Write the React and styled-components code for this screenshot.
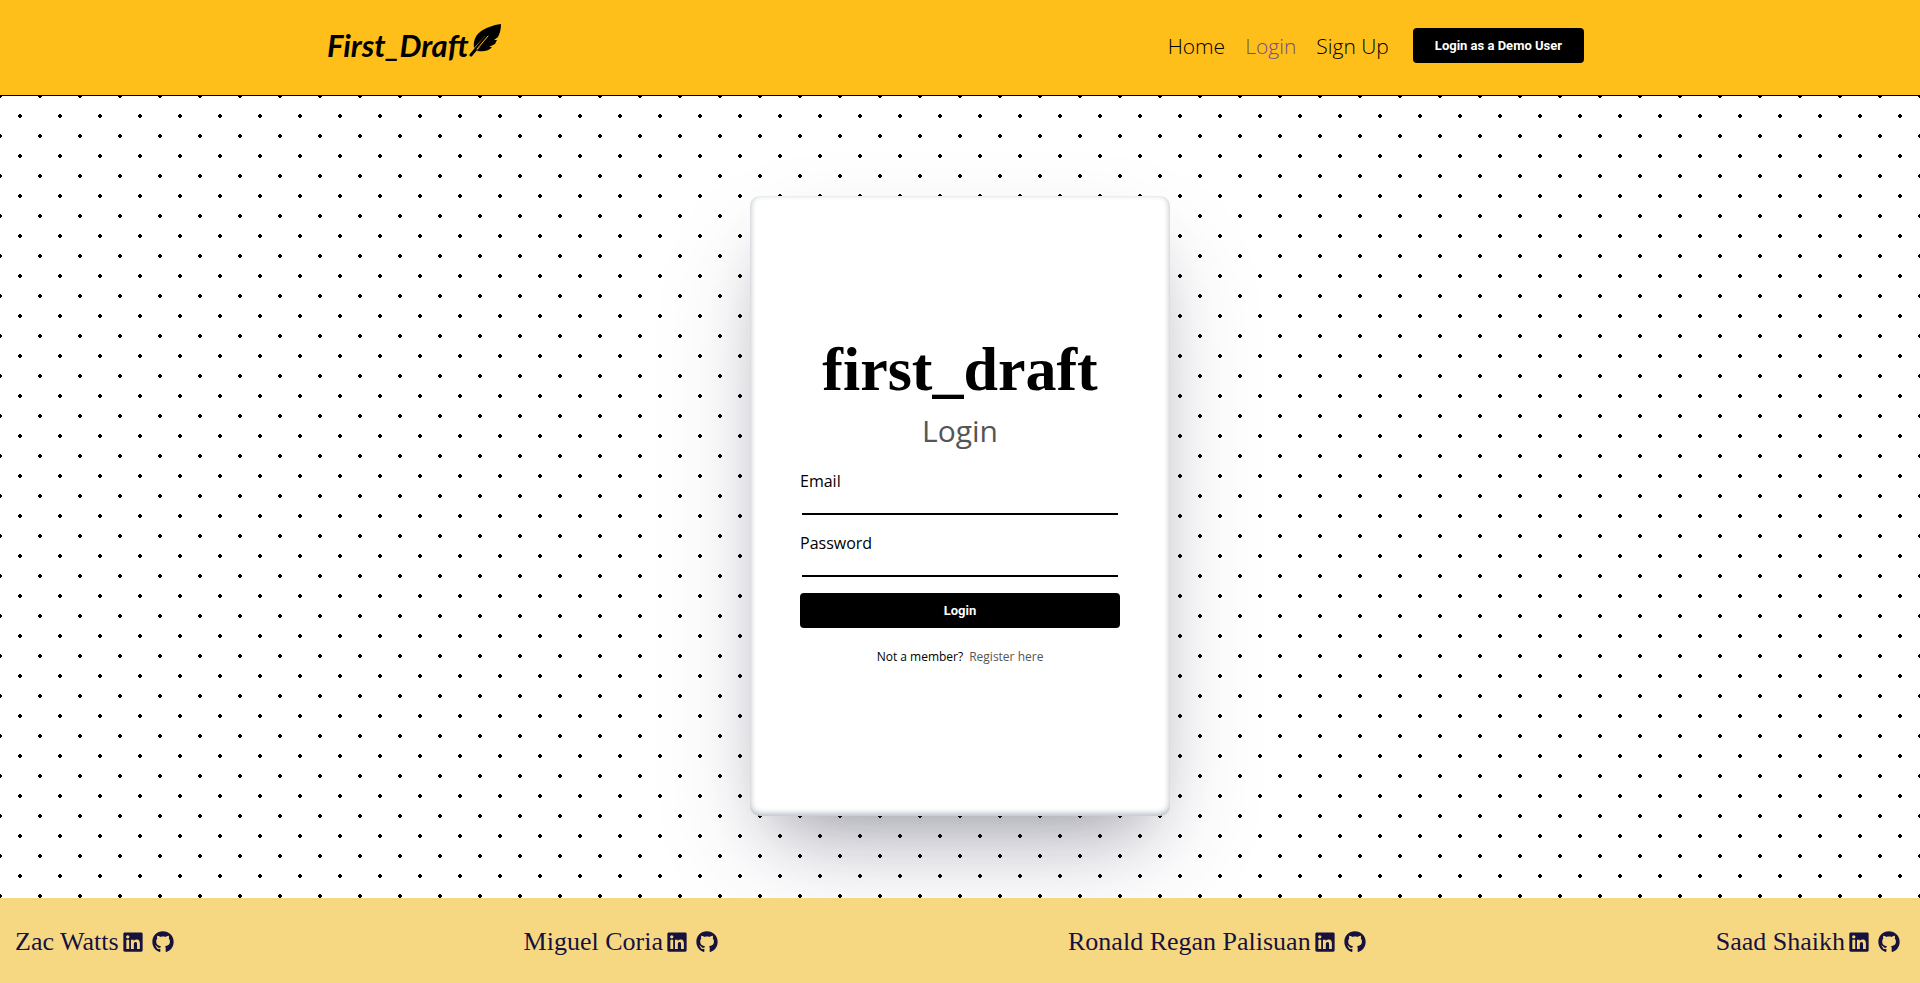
import React from "react";
import styled, { createGlobalStyle } from "styled-components";
import { FaGithub, FaLinkedin } from "react-icons/fa";

const GlobalStyle = createGlobalStyle`
  * { box-sizing: border-box; }
  body {
    margin: 0;
    color: #000;
    font-family: "Open Sans", "Noto Sans", sans-serif;
  }
`;

const Page = styled.div`
  display: flex;
  flex-direction: column;
  min-height: 100vh;
`;

const Header = styled.header`
  background: #ffbf1a;
  border-bottom: 1px solid #000;
`;

const HeaderInner = styled.div`
  display: flex;
  align-items: center;
  justify-content: space-between;
  max-width: 1280px;
  margin: 0 auto;
  padding: 16px 16px 20px 7px;
`;

const Logo = styled.a`
  display: flex;
  align-items: center;
  color: #000;
  text-decoration: none;
  font: italic 700 31px/59px "Brush Script MT", "Lato", sans-serif;
`;

const Feather = styled.svg`
  width: 34px;
  height: 34px;
  margin-bottom: 12px;
`;

const Nav = styled.nav`
  display: flex;
  align-items: center;
  gap: 20px;
`;

const NavLink = styled.a`
  color: ${(p) => (p.$visited ? "#754a96" : "#000")};
  font-size: 21px;
  font-weight: 300;
  line-height: 28px;
  text-decoration: none;
`;

const Button = styled.button`
  padding: 10px 22px;
  border: 0;
  border-radius: 4px;
  background: #000;
  color: #fff;
  font: 700 13px/15px Roboto, "Liberation Sans", Arial, sans-serif;
  cursor: pointer;
`;

const DemoButton = styled(Button)`
  margin-left: 4px;
`;

const Main = styled.main`
  flex: 1;
  display: flex;
  align-items: flex-start;
  justify-content: center;
  padding: 100px 16px 82px;
  background-color: #fff;
  background-image: radial-gradient(#000 2px, transparent 2px),
    radial-gradient(#000 2px, transparent 2px);
  background-position: 20px 20px, 0 0;
  background-size: 40px 40px;
`;

const Card = styled.section`
  display: flex;
  flex-direction: column;
  justify-content: center;
  width: 100%;
  max-width: 420px;
  min-height: 620px;
  padding: 0 50px 18px;
  border-radius: 10px;
  background: #fff;
  box-shadow: rgba(50, 50, 93, 0.25) 0 50px 100px -20px,
    rgba(0, 0, 0, 0.3) 0 30px 60px -30px,
    rgba(10, 37, 64, 0.35) 0 -2px 6px 0 inset;
`;

const Title = styled.h1`
  margin: 0;
  text-align: center;
  font: 700 62px/80px "Source Serif Pro", "Liberation Serif", serif;
`;

const Subtitle = styled.h2`
  margin: 0 0 16px;
  color: #555;
  text-align: center;
  font-size: 30px;
  font-weight: 400;
  line-height: 44px;
`;

const Form = styled.form`
  display: flex;
  flex-direction: column;
`;

const Field = styled.div`
  display: flex;
  flex-direction: column;
  margin-bottom: 16px;
`;

const Label = styled.label`
  font-size: 16px;
  font-weight: 500;
  line-height: 24px;
`;

const Input = styled.input`
  height: 22px;
  margin: 0 2px;
  padding: 0;
  border: 0;
  border-bottom: 2px solid #000;
  background: transparent;
  font: inherit;
  outline: none;
`;

const Prompt = styled.p`
  display: flex;
  justify-content: center;
  gap: 6px;
  margin: 20px 0 0;
  font-size: 12px;
  font-weight: 500;
  line-height: 18px;
`;

const RegisterLink = styled.a`
  color: #555;
  text-decoration: none;
`;

const Footer = styled.footer`
  display: flex;
  align-items: center;
  justify-content: space-between;
  flex-wrap: wrap;
  min-height: 85px;
  padding: 2px 20px 0 15px;
  background: #f6d882;
`;

const Author = styled.div`
  display: flex;
  align-items: center;
  color: #17113f;
  font: 400 26px/36px "Source Serif Pro", "Liberation Serif", serif;
`;

const IconLink = styled.a`
  display: flex;
  margin-left: ${(p) => p.$gap}px;
  color: #17113f;
  font-size: 22px;
`;

const authors = ["Zac Watts", "Miguel Coria", "Ronald Regan Palisuan", "Saad Shaikh"];

export default function App() {
  return (
    <>
      <GlobalStyle />
      <Page>
        <Header>
          <HeaderInner>
            <Logo href="#home">
              First_Draft
              <Feather viewBox="0 0 34 34" aria-hidden="true">
                <path d="M32 1C24 2 16 5 11 9c-5 4-7 10-6 16L16 13l2 1L8 28c7 1 12 0 15-4l-3 0 6-3 2-4-3 0 4-3c2-4 3-8 3-13Z" />
                <path
                  d="M17 14 2 32"
                  fill="none"
                  stroke="currentColor"
                  strokeWidth="3"
                  strokeLinecap="round"
                />
                <path
                  d="M19 13 8 26"
                  fill="none"
                  stroke="#ffbf1a"
                  strokeWidth="1"
                  strokeLinecap="round"
                />
              </Feather>
            </Logo>
            <Nav>
              <NavLink href="#home">Home</NavLink>
              <NavLink href="#login" $visited>Login</NavLink>
              <NavLink href="#signup">Sign Up</NavLink>
              <DemoButton type="button">Login as a Demo User</DemoButton>
            </Nav>
          </HeaderInner>
        </Header>
        <Main>
          <Card>
            <Title>first_draft</Title>
            <Subtitle>Login</Subtitle>
            <Form onSubmit={(e) => e.preventDefault()}>
              <Field>
                <Label htmlFor="email">Email</Label>
                <Input id="email" type="email" />
              </Field>
              <Field>
                <Label htmlFor="password">Password</Label>
                <Input id="password" type="password" />
              </Field>
              <Button type="submit">Login</Button>
            </Form>
            <Prompt>
              Not a member? <RegisterLink href="#signup">Register here</RegisterLink>
            </Prompt>
          </Card>
        </Main>
        <Footer>
          {authors.map((name) => (
            <Author key={name}>
              {name}
              <IconLink href="#linkedin" aria-label={`${name} on LinkedIn`} $gap={3}>
                <FaLinkedin />
              </IconLink>
              <IconLink href="#github" aria-label={`${name} on GitHub`} $gap={8}>
                <FaGithub />
              </IconLink>
            </Author>
          ))}
        </Footer>
      </Page>
    </>
  );
}
